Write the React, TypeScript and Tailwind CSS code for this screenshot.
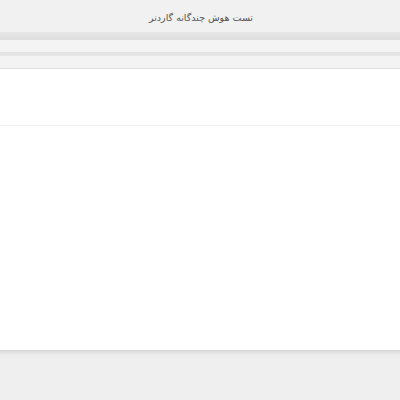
export default function App() {
  return (
    <div className="w-[400px] h-[400px] bg-[#efefef] flex flex-col overflow-hidden" style={{ fontFamily: '"DejaVu Sans", "Noto Sans", sans-serif' }}>
      {/* Header */}
      <div className="h-[32px] shrink-0 bg-[#f1f1f1] flex items-center justify-center">
        <h1 dir="rtl" className="text-[9.5px] text-[#555] pt-[5px] pl-[2px]">تست هوش چندگانه گاردنر</h1>
      </div>

      {/* Toolbar bands */}
      <div className="h-[8px] shrink-0 bg-gradient-to-b from-[#e6e6e6] to-[#dedede]" />
      <div className="h-[12px] shrink-0 bg-[#f4f4f4]" />
      <div className="h-[4px] shrink-0 bg-gradient-to-b from-[#e2e2e2] to-[#e8e8e8]" />
      <div className="h-[13px] shrink-0 bg-[#f3f3f3] border-b border-[#e0e0e0]" />

      {/* Content card */}
      <div className="h-[281px] shrink-0 bg-white flex flex-col">
        <div className="h-[57px] border-b border-[#f0f0f0]" />
        <div className="flex-1" />
      </div>

      {/* Footer area */}
      <div className="flex-1 bg-gradient-to-b from-[#d8d8d8] via-[#ececec] to-[#efefef] bg-[length:100%_10px] bg-no-repeat" />
    </div>
  );
}
